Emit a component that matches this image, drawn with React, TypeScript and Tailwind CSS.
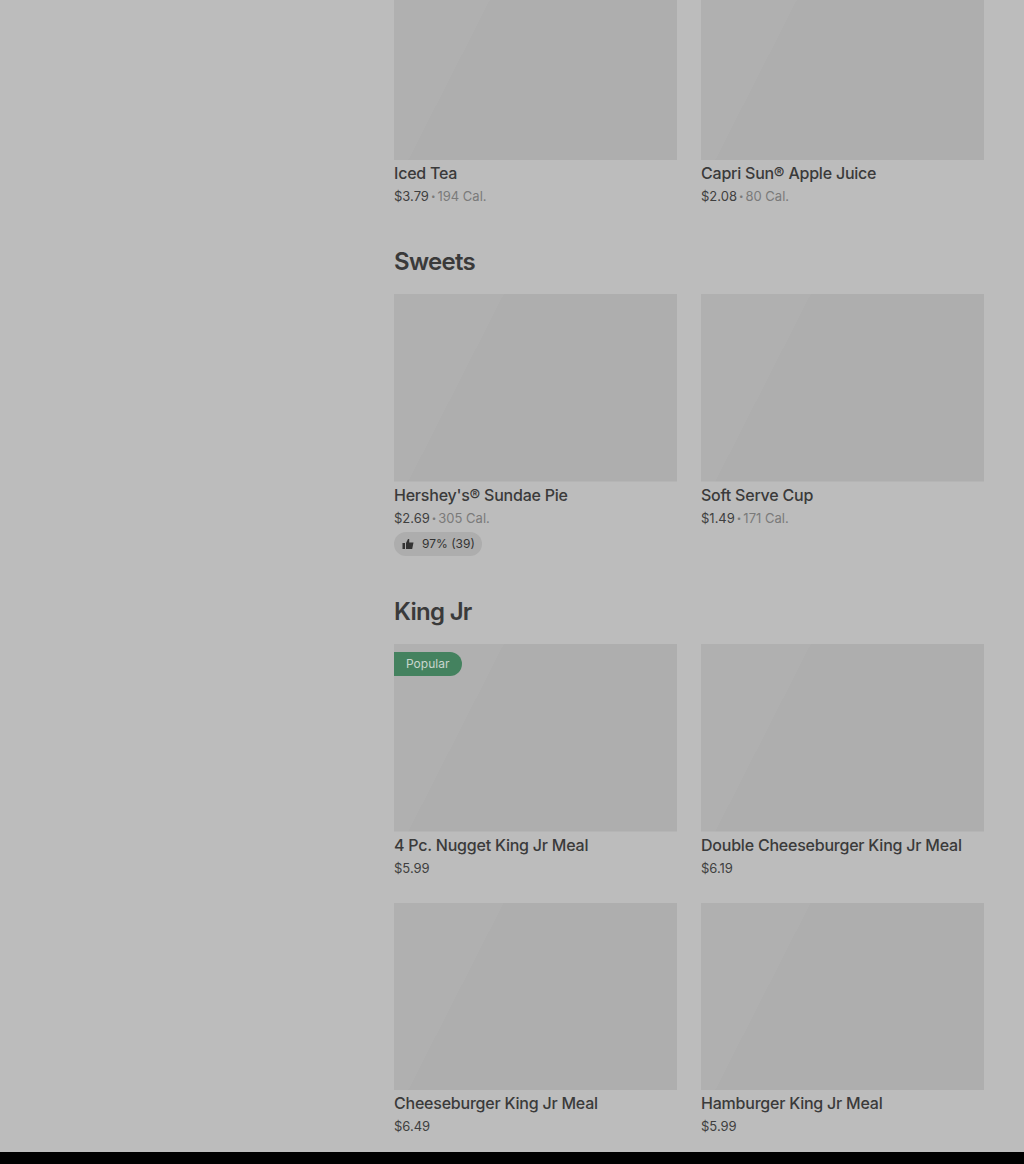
const fontStack = "font-['Inter','Liberation_Sans',sans-serif]"

type Item = {
  name: string
  price: string
  cal?: string
  rating?: string
  popular?: boolean
}

function ThumbIcon() {
  return (
    <svg className="shrink-0" width="12" height="12" viewBox="0 0 12 12" fill="currentColor" aria-hidden="true">
      <rect x="0.5" y="5" width="2.5" height="6" />
      <path d="M4 5 L6 1 H7.2 V4.5 H11.5 L10.2 11 H4 Z" />
    </svg>
  )
}

function MenuCard({ item, imageClass }: { item: Item; imageClass: string }) {
  return (
    <div className="flex flex-col">
      <div
        className={`relative w-full bg-[linear-gradient(117deg,#b0b0b0_0%,#b0b0b0_29%,#aeaeae_29%,#aeaeae_100%)] bg-[length:100%_187.5px] bg-bottom bg-no-repeat ${imageClass}`}
      >
        {item.popular && (
          <span className="absolute left-0 top-2 flex h-6 w-[68px] items-center rounded-r-full bg-[#44825f] pl-3 text-xs text-[#c9d6ce]">
            Popular
          </span>
        )}
      </div>
      <div className="mt-[1px] text-base leading-6 font-medium tracking-[-0.22px] whitespace-nowrap text-[#3a3a3a]">
        {item.name}
      </div>
      <div className="mt-[1px] mb-[1px] flex items-center text-[13px] leading-5">
        <span className="text-[#3f3f3f]">{item.price}</span>
        {item.cal && (
          <>
            <span className="mx-[2px] text-[8px] text-[#7a7a7a]">•</span>
            <span className="text-[#7a7a7a]">{item.cal}</span>
          </>
        )}
      </div>
      {item.rating && (
        <div className="mt-[3px] mb-[1px] flex h-[24px] w-[88px] items-center gap-2 rounded-full bg-[#adadad] pl-2 text-xs whitespace-nowrap text-[#333333]">
          <ThumbIcon />
          {item.rating}
        </div>
      )}
    </div>
  )
}

function SectionTitle({ children }: { children: string }) {
  return <h2 className="text-2xl leading-8 font-semibold tracking-[-0.7px] text-[#3a3a3a]">{children}</h2>
}

export default function App() {
  return (
    <div className={`flex h-[1164px] w-[1024px] flex-col overflow-hidden bg-[#bcbcbc] ${fontStack}`}>
      <main className="h-[1152px] pl-[394px] pr-10">
        <div className="grid grid-cols-2 gap-x-6">
          <MenuCard item={{ name: "Iced Tea", price: "$3.79", cal: "194 Cal." }} imageClass="h-[160px]" />
          <MenuCard item={{ name: "Capri Sun® Apple Juice", price: "$2.08", cal: "80 Cal." }} imageClass="h-[160px]" />
        </div>

        <div className="mt-[39px]">
          <SectionTitle>Sweets</SectionTitle>
        </div>
        <div className="mt-[16px] grid grid-cols-2 gap-x-6">
          <MenuCard item={{ name: "Hershey's® Sundae Pie", price: "$2.69", cal: "305 Cal.", rating: "97% (39)" }} imageClass="h-[187.5px]" />
          <MenuCard item={{ name: "Soft Serve Cup", price: "$1.49", cal: "171 Cal." }} imageClass="h-[187.5px]" />
        </div>

        <div className="mt-[39px]">
          <SectionTitle>King Jr</SectionTitle>
        </div>
        <div className="mt-[16.5px] grid grid-cols-2 gap-x-6 gap-y-6">
          <MenuCard item={{ name: "4 Pc. Nugget King Jr Meal", price: "$5.99", popular: true }} imageClass="h-[187.5px]" />
          <MenuCard item={{ name: "Double Cheeseburger King Jr Meal", price: "$6.19" }} imageClass="h-[187.5px]" />
          <MenuCard item={{ name: "Cheeseburger King Jr Meal", price: "$6.49" }} imageClass="h-[187px]" />
          <MenuCard item={{ name: "Hamburger King Jr Meal", price: "$5.99" }} imageClass="h-[187px]" />
        </div>
      </main>
      <div className="h-3 bg-black" />
    </div>
  )
}
